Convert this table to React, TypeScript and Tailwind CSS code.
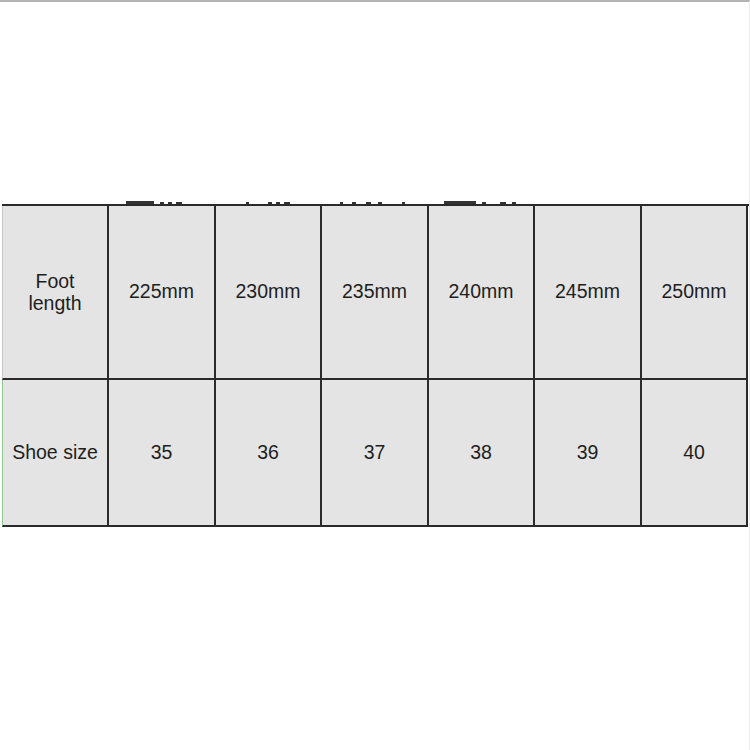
const widths = ['w-[107px]', 'w-[107px]', 'w-[106px]', 'w-[107px]', 'w-[106px]', 'w-[107px]', 'w-[106px]'];

const lengths = ['225mm', '230mm', '235mm', '240mm', '245mm', '250mm'];
const sizes = ['35', '36', '37', '38', '39', '40'];

// bits of a cropped heading peeking over the table: [left, width, height]
const marks: [number, number, number][] = [
  [126, 28, 3], [160, 4, 2], [168, 4, 2], [176, 6, 2],
  [246, 3, 2], [268, 4, 2], [276, 4, 2], [284, 6, 2],
  [340, 3, 2], [352, 4, 2], [366, 5, 2], [378, 4, 2], [402, 3, 2],
  [444, 32, 3], [482, 4, 2], [500, 6, 2], [512, 4, 2],
];

function Cell({ w, children, first, green }: { w: string; children: React.ReactNode; first?: boolean; green?: boolean }) {
  return (
    <div
      className={`${w} shrink-0 flex items-center justify-center text-center border-r-2 border-b-2 border-[#2a2a2a] bg-[#e4e4e4] ${
        first ? (green ? 'border-l border-l-[#8fc98f]' : 'border-l border-l-[#c8c8c8]') : ''
      }`}
    >
      {children}
    </div>
  );
}

export default function App() {
  return (
    <div
      className="w-[750px] h-[750px] bg-white border-t-2 border-t-[#b4b4b4] border-r border-r-[#ececec] text-[19.5px] text-[#1e1e1e]"
      style={{ fontFamily: '"Liberation Sans", Arial, sans-serif' }}
    >
      <div className="mt-[199px] h-[3px] relative">
        {marks.map(([x, w, h]) => (
          <div
            key={x}
            className="absolute bottom-0 bg-[#333]"
            style={{ left: x, width: w, height: h }}
          />
        ))}
      </div>
      <div className="ml-[2px] border-t-2 border-t-[#2a2a2a] w-[747px]">
        <div className="flex h-[174px]">
          <Cell w={widths[0]} first>
            <span className="leading-[22px]">
              Foot
              <br />
              length
            </span>
          </Cell>
          {lengths.map((l, i) => (
            <Cell key={l} w={widths[i + 1]}>
              {l}
            </Cell>
          ))}
        </div>
        <div className="flex h-[147px]">
          <Cell w={widths[0]} first green>
            Shoe size
          </Cell>
          {sizes.map((s, i) => (
            <Cell key={s} w={widths[i + 1]}>
              {s}
            </Cell>
          ))}
        </div>
      </div>
    </div>
  );
}
